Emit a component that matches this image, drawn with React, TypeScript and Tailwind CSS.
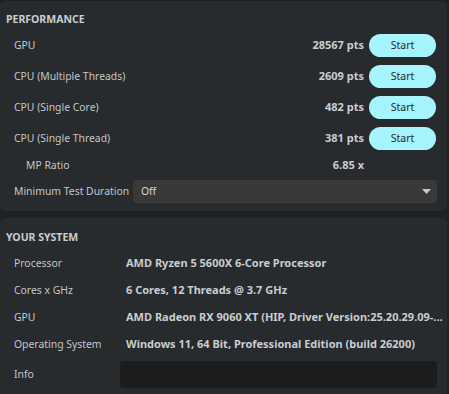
const perf = [
  { label: 'GPU', score: '28567 pts' },
  { label: 'CPU (Multiple Threads)', score: '2609 pts' },
  { label: 'CPU (Single Core)', score: '482 pts' },
  { label: 'CPU (Single Thread)', score: '381 pts' },
];

const system = [
  { label: 'Processor', value: 'AMD Ryzen 5 5600X 6-Core Processor' },
  { label: 'Cores x GHz', value: '6 Cores, 12 Threads @ 3.7 GHz' },
  { label: 'GPU', value: 'AMD Radeon RX 9060 XT (HIP, Driver Version:25.20.29.09-...' },
  { label: 'Operating System', value: 'Windows 11, 64 Bit, Professional Edition (build 26200)' },
];

export default function App() {
  return (
    <div className="w-[449px] h-[394px] overflow-hidden bg-[#1f2224] text-[10.4px] text-[#c3c7cb] font-['Noto_Sans',sans-serif]">
      <div className="w-[447px] h-[210px] mt-px rounded-md bg-[#272b2d]">
        <div className="h-[29px] pt-[10px] pl-[6px] text-[10.5px] font-bold leading-[16px] text-[#c9cdd1]">PERFORMANCE</div>
        {perf.map((row) => (
          <div key={row.label} className="h-[31px] flex items-center pl-[14px] pr-[11px]">
            <span className="flex-1">{row.label}</span>
            <span className="font-bold text-[11px] text-[#c9cdd1]">{row.score}</span>
            <button className="ml-[5px] w-[67px] h-[23px] rounded-full bg-[#a6f4fd] text-[#1e2a30] text-[10.5px]">Start</button>
          </div>
        ))}
        <div className="h-[23px] flex items-center pl-[26px] pr-[83px]">
          <span className="flex-1">MP Ratio</span>
          <span className="font-bold text-[11px] text-[#c9cdd1]">6.85 x</span>
        </div>
        <div className="h-[29px] flex items-center pl-[14px] pr-[10px]">
          <span className="w-[119px] shrink-0 whitespace-nowrap">Minimum Test Duration</span>
          <div className="flex-1 h-[23px] flex items-center rounded bg-[#393939] pl-2 pr-[6px] text-[#d4d6d8]">
            <span className="flex-1">Off</span>
            <svg width="9" height="5" viewBox="0 0 9 5"><path d="M0 0h9L4.5 5z" fill="#c8c8c8" /></svg>
          </div>
        </div>
      </div>
      <div className="w-[447px] h-[180px] mt-[7px] rounded-md bg-[#272b2d]">
        <div className="h-[32px] pt-[11px] pl-[6px] text-[10.5px] font-bold leading-[16px] text-[#c9cdd1]">YOUR SYSTEM</div>
        {system.map((row) => (
          <div key={row.label} className="h-[27px] flex items-center pl-[14px] pr-[11px]">
            <span className="w-[112px] shrink-0">{row.label}</span>
            <span className="font-bold text-[11px] text-[#c9cdd1] whitespace-nowrap">{row.value}</span>
          </div>
        ))}
        <div className="h-[31px] flex items-center pl-[14px] pr-[10px] pt-[2px]">
          <span className="w-[106px] shrink-0">Info</span>
          <div className="flex-1 h-[27px] rounded bg-[#1c1c1c]" />
        </div>
      </div>
    </div>
  );
}
